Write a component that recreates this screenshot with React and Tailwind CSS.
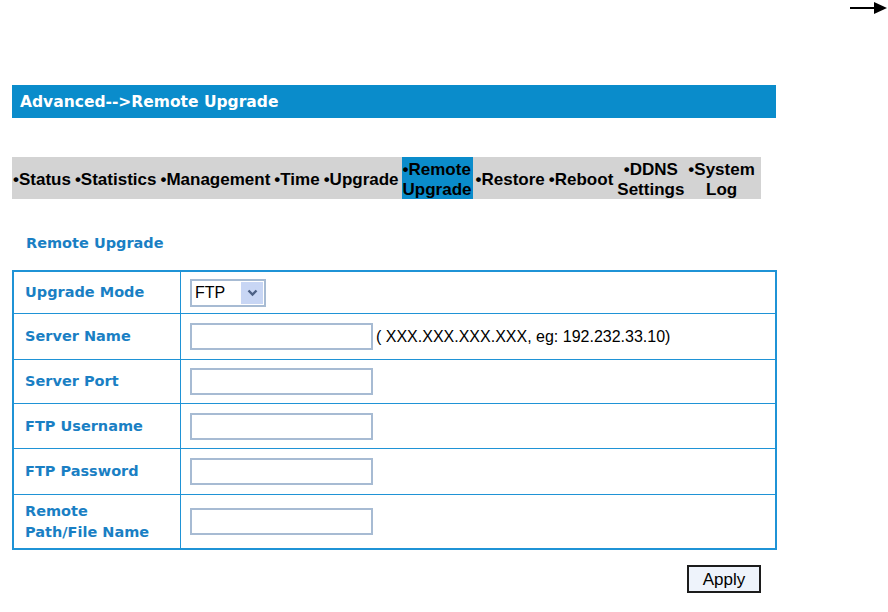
import React from "react";

const verd = { fontFamily: '"DejaVu Sans", Verdana, sans-serif' };
const arial = { fontFamily: '"Liberation Sans", Arial, sans-serif' };

function NavItem({ children, active, center }) {
  return (
    <div
      className={`flex h-full items-center px-[1px] leading-[20px] font-bold text-[17px] text-black ${center ? "text-center" : ""} ${active ? "bg-[#0a8ccb]" : ""}`}
    >
      <div className="pt-[3px]">{children}</div>
    </div>
  );
}

function Row({ label, children, h }) {
  return (
    <div className={`flex border-t border-[#1f93d6] first:border-t-0 ${h}`}>
      <div className="w-[167px] shrink-0 border-r border-[#1f93d6] flex items-center pl-[11px] text-[#1a7fc4] font-bold text-[14.5px] leading-[21px]" style={verd}>
        {label}
      </div>
      <div className="flex items-center pl-[9px]">{children}</div>
    </div>
  );
}

function TextInput() {
  return <input className="w-[183px] h-[27px] border-2 border-[#a7bbd3] bg-white outline-none" />;
}

export default function App() {
  return (
    <div className="relative w-[888px] h-[612px] bg-white" style={arial}>
      <svg className="absolute left-[850px] top-[1px]" width="37" height="14" viewBox="0 0 37 14">
        <line x1="0" y1="7" x2="26" y2="7" stroke="black" strokeWidth="2" />
        <polygon points="24,1 37,7 24,13" fill="black" />
      </svg>
      <div className="pt-[85px] pl-[12px]">
        <div className="w-[764px] h-[33px] bg-[#0a8ccb] flex items-center pl-[8px] pt-[2px] text-white font-bold text-[15.5px]" style={verd}>
          Advanced--&gt;Remote Upgrade
        </div>
        <div className="mt-[39px] w-[749px] h-[42px] bg-[#d3d3d3] flex items-center gap-[2px]" style={arial}>
          <NavItem>•Status</NavItem>
          <NavItem>•Statistics</NavItem>
          <NavItem>•Management</NavItem>
          <NavItem>•Time</NavItem>
          <NavItem>•Upgrade</NavItem>
          <NavItem active>•Remote<br />Upgrade</NavItem>
          <NavItem>•Restore</NavItem>
          <NavItem>•Reboot</NavItem>
          <NavItem center>•DDNS<br />Settings</NavItem>
          <NavItem center>•System<br />Log</NavItem>
        </div>
        <div className="mt-[36px] pl-[14px] text-[#1a7fc4] font-bold text-[14.5px] leading-[16px]" style={verd}>
          Remote Upgrade
        </div>
        <div className="mt-[19px] w-[765px] border-2 border-[#1f93d6]">
          <Row label="Upgrade Mode" h="h-[41px]">
            <div className="flex items-center w-[76px] h-[28px] border-2 border-[#a7bbd3] bg-white pl-[3px]">
              <span className="text-[16px] text-black flex-1">FTP</span>
              <span className="w-[22px] h-[22px] mr-[1px] bg-[#c8d6f4] flex items-center justify-center">
                <svg width="11" height="8" viewBox="0 0 11 8"><path d="M1.5 1.5 L5.5 5.5 L9.5 1.5" stroke="#4d6185" strokeWidth="2.4" fill="none" /></svg>
              </span>
            </div>
          </Row>
          <Row label="Server Name" h="h-[46px]">
            <TextInput />
            <span className="ml-[3px] text-[16px] text-black">( XXX.XXX.XXX.XXX, eg: 192.232.33.10)</span>
          </Row>
          <Row label="Server Port" h="h-[44px]"><TextInput /></Row>
          <Row label="FTP Username" h="h-[45px]"><TextInput /></Row>
          <Row label="FTP Password" h="h-[46px]"><TextInput /></Row>
          <Row label={<>Remote<br />Path/File Name</>} h="h-[54px]"><TextInput /></Row>
        </div>
        <div className="w-[749px] flex justify-end mt-[15px]">
          <button className="w-[74px] h-[28px] border-2 border-[#1c1c1c] bg-[#eef3fb] text-[17px] text-black leading-none" style={arial}>
            Apply
          </button>
        </div>
      </div>
    </div>
  );
}
